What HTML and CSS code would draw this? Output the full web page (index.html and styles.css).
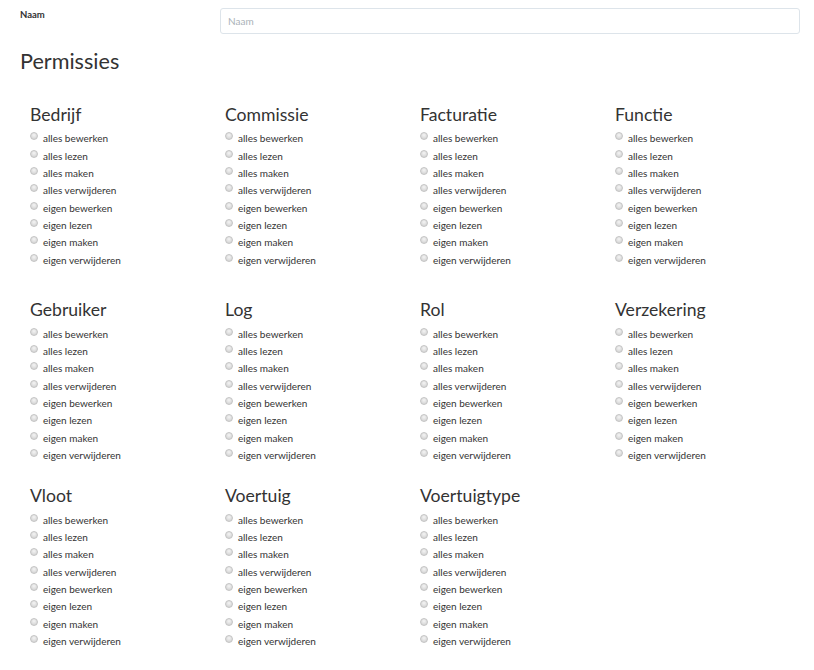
FILE: index.html
```html
<!DOCTYPE html>
<html>
<head>
<meta charset="utf-8">
<link rel="stylesheet" href="styles.css">
</head>
<body>
<div class="page">
  <div class="form-row">
    <label class="label">Naam</label>
    <input class="input" type="text" placeholder="Naam">
  </div>
  <h2 class="title">Permissies</h2>
  <div class="grid" id="grid"></div>
</div>
<script src="app.js"></script>
</body>
</html>
```
FILE: styles.css
```css
* { box-sizing: border-box; }
html, body { margin: 0; padding: 0; background: #fff; }
body { font-family: Lato, "Open Sans", sans-serif; color: #333; }
.page { padding: 8px 14px 0 20px; }
.form-row { display: flex; align-items: flex-start; }
.label { width: 200px; font-size: 9.5px; font-weight: 700; padding-top: 1px; color: #333; }
.input {
  flex: 1; height: 26px; border: 1px solid #dde4ea; border-radius: 3px;
  padding: 0 7px; font-family: Lato, sans-serif; font-size: 10px; color: #333;
  outline: none;
}
.input::placeholder { color: #aab2b8; }
.title { font-size: 21.6px; font-weight: 400; margin: 14px 0 0 0; line-height: 26px; color: #333; }
.grid { display: grid; grid-template-columns: repeat(4, 195px); padding-left: 10px; margin-top: 30px; }
.group { width: 195px; }
.row1 { margin-bottom: 31.2px; }
.row2 { margin-bottom: 21.7px; }
.group-title { font-size: 17.6px; font-weight: 400; margin: 0; line-height: 22px; height: 25.5px; color: #333; }
.item { display: flex; align-items: center; height: 17.35px; font-size: 10px; color: #333; }
.radio {
  width: 8px; height: 8px; border-radius: 50%; margin: -4px 5px 0 0;
  border: 1px solid #c4c4c4;
  background: radial-gradient(circle at 50% 35%, #f4f4f4 0%, #dcdcdc 60%, #cfcfcf 100%);
  flex: none;
}
```
FILE: app.js
```js
const groups = [
  ["Bedrijf",1],["Commissie",1],["Facturatie",1],["Functie",1],
  ["Gebruiker",2],["Log",2],["Rol",2],["Verzekering",2],
  ["Vloot",3],["Voertuig",3],["Voertuigtype",3]
];
const perms = ["alles bewerken","alles lezen","alles maken","alles verwijderen","eigen bewerken","eigen lezen","eigen maken","eigen verwijderen"];
const grid = document.getElementById("grid");
for (const [name,row] of groups) {
  const g = document.createElement("div");
  g.className = "group row" + row;
  const h = document.createElement("h3");
  h.className = "group-title";
  h.textContent = name;
  g.appendChild(h);
  for (const p of perms) {
    const it = document.createElement("div");
    it.className = "item";
    const r = document.createElement("span");
    r.className = "radio";
    const t = document.createElement("span");
    t.textContent = p;
    it.appendChild(r); it.appendChild(t);
    g.appendChild(it);
  }
  grid.appendChild(g);
}
```
